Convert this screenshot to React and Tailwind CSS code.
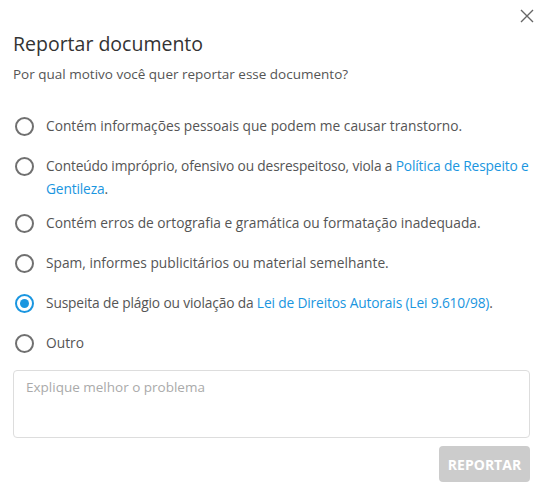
import React, { useState } from "react";

const OPTIONS = [
  { id: "pessoais", text: "Contém informações pessoais que podem me causar transtorno." },
  {
    id: "improprio",
    text: "Conteúdo impróprio, ofensivo ou desrespeitoso, viola a ",
    link: "Política de Respeito e Gentileza",
    tight: true,
  },
  { id: "erros", text: "Contém erros de ortografia e gramática ou formatação inadequada." },
  { id: "spam", text: "Spam, informes publicitários ou material semelhante." },
  {
    id: "plagio",
    text: "Suspeita de plágio ou violação da ",
    link: "Lei de Direitos Autorais (Lei 9.610/98)",
    tight: true,
  },
  { id: "outro", text: "Outro" },
];

const Radio = ({ checked }) => (
  <span
    className={`flex h-[19px] w-[19px] items-center justify-center rounded-full border-2 ${
      checked ? "border-[#1a96e0]" : "border-[#707070]"
    }`}
  >
    {checked && <span className="h-[9px] w-[9px] rounded-full bg-[#1a96e0]" />}
  </span>
);

export default function App() {
  const [selected, setSelected] = useState("plagio");

  return (
    <div
      className="relative h-[498px] w-[545px] bg-white text-[#555]"
      style={{ fontFamily: '"Open Sans", "Noto Sans", sans-serif' }}
    >
      {/* close */}
      <button className="absolute right-[11px] top-[9px] flex h-[14px] w-[14px] items-center justify-center text-[#666]">
        <svg viewBox="0 0 14 14" className="h-[14px] w-[14px]" fill="none" stroke="currentColor" strokeWidth="1.4">
          <path d="M1 1 L13 13 M13 1 L1 13" />
        </svg>
      </button>

      <div className="flex flex-col pl-[13px] pr-[15px] pt-[30px]">
        <h2 className="text-[19.5px] leading-[28px] text-[#333]">Reportar documento</h2>
        <p className="mt-[6px] text-[13.5px] leading-[20px]">
          Por qual motivo você quer reportar esse documento?
        </p>

        <div className="mt-[22px] flex flex-col">
          {OPTIONS.map((o) => (
            <label
              key={o.id}
              className="-mr-[3px] flex min-h-[40px] cursor-pointer items-start gap-[12px]"
              onClick={() => setSelected(o.id)}
            >
              <span className="flex h-[40px] shrink-0 items-center pl-[2px]">
                <Radio checked={selected === o.id} />
              </span>
              <span
                className={`pb-[3px] pt-[8px] text-[13.75px] leading-[23px] ${
                  o.tight ? "tracking-[-0.15px]" : ""
                }`}
              >
                {o.text}
                {o.link && (
                  <>
                    <a className="text-[#1a96e0]">{o.link}</a>.
                  </>
                )}
              </span>
            </label>
          ))}
        </div>

        <textarea
          className="mt-[7px] h-[68px] w-full resize-none rounded-[4px] border border-[#ddd] px-[12px] py-[6px] text-[13.5px] leading-[20px] text-[#555] outline-none placeholder:text-[#aaa]"
          placeholder="Explique melhor o problema"
        />

        <div className="mt-[8px] flex justify-end">
          <button className="h-[36px] w-[91px] rounded-[4px] bg-[#cccccc] text-[14px] font-bold text-white">
            REPORTAR
          </button>
        </div>
      </div>
    </div>
  );
}
